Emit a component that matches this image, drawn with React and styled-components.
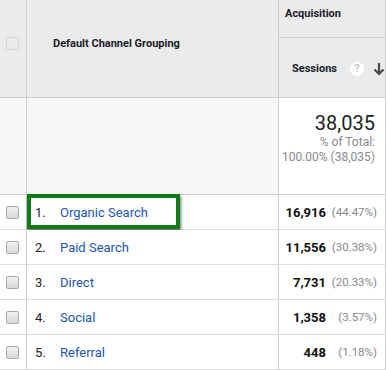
import React from "react";
import styled, { createGlobalStyle } from "styled-components";

const Global = createGlobalStyle`
  html, body { margin: 0; padding: 0; background: #fff; }
  body { font-family: Roboto, "Liberation Sans", Arial, sans-serif; }
`;

const Table = styled.div`
  display: grid;
  grid-template-columns: 27px 252px 107px;
  grid-template-rows: 38px 60px 97px repeat(5, 35px);
  width: 386px;
  color: #222;
`;

const Cell = styled.div`
  box-sizing: border-box;
  border-right: 1px solid #cfcfcf;
  border-bottom: 1px solid #dcdcdc;
  background: #fff;
  position: relative;
  display: flex;
  align-items: center;
`;

const HeadCheckCell = styled(Cell)`
  grid-row: 1 / 3;
  grid-column: 1;
  background: #ebebeb;
  border-bottom-color: #cfcfcf;
  justify-content: center;
  padding-bottom: 10px;
  padding-right: 2px;
`;

const HeadDimCell = styled(Cell)`
  grid-row: 1 / 3;
  grid-column: 2;
  background: #ebebeb;
  border-bottom-color: #cfcfcf;
  padding: 0 0 10px 26px;
  font-size: 11px;
  font-weight: 700;
  color: #1c1c2c;
`;

const GroupCell = styled(Cell)`
  background: #ebebeb;
  border-bottom-color: #d4d4d4;
  align-items: flex-start;
  padding: 7px 0 0 6px;
  font-size: 11px;
  font-weight: 700;
  color: #1c1c2c;
`;

const MetricHead = styled(Cell)`
  background: #ebebeb;
  border-bottom-color: #cfcfcf;
  padding: 2px 0 0 13px;
  font-size: 11px;
  font-weight: 700;
  color: #1c1c2c;
`;

const HelpIcon = styled.span`
  width: 14px;
  height: 14px;
  border-radius: 50%;
  background: #fff;
  color: #c4c4c4;
  font-size: 10px;
  font-weight: 700;
  display: inline-flex;
  align-items: center;
  justify-content: center;
  margin-left: 13px;
`;

const SortArrow = styled.svg`
  margin-left: 9px;
  width: 12px;
  height: 14px;
`;

const TotalCell = styled(Cell)`
  background: #f7f7f7;
  border-bottom-color: #cfcfcf;
`;

const TotalBox = styled(Cell)`
  flex-direction: column;
  align-items: flex-end;
  justify-content: flex-start;
  padding: 13px 10px 0 0;
  border-bottom-color: #cfcfcf;
`;

const Big = styled.div`
  font-size: 20px;
  line-height: 24px;
  color: #222;
`;

const Small = styled.div`
  font-size: 12px;
  line-height: 15px;
  color: #8a8a8a;
  text-align: right;
`;

const CheckCell = styled(Cell)`
  justify-content: center;
  padding-right: 2px;
`;

const Box = styled.span`
  box-sizing: border-box;
  width: 13px;
  height: 13px;
  border-radius: 2px;
  border: 1px solid ${(p) => (p.$light ? "#d8d8d8" : "#a9a9a9")};
  background: ${(p) =>
    p.$light ? "#ebebeb" : "linear-gradient(#f2f2f2, #d9d9d9)"};
`;

const DimCell = styled(Cell)`
  padding-left: 8px;
  font-size: 13px;
`;

const Index = styled.span`
  width: 25px;
  color: #222;
`;

const Link = styled.span`
  color: #2056ae;
`;

const ValCell = styled(Cell)`
  justify-content: flex-end;
  padding-right: 8px;
  font-size: 13px;
`;

const Num = styled.span`
  font-weight: 700;
  color: #111;
`;

const Pct = styled.span`
  display: inline-block;
  width: 51px;
  text-align: right;
  font-size: 11.5px;
  color: #888;
`;

const Highlight = styled.div`
  position: absolute;
  left: 0;
  top: -1px;
  width: 153px;
  height: 35px;
  box-sizing: border-box;
  border: 4px solid #137a17;
  box-shadow: 1px 2px 3px rgba(0, 0, 0, 0.55);
  pointer-events: none;
`;

const rows = [
  ["Organic Search", "16,916", "(44.47%)"],
  ["Paid Search", "11,556", "(30.38%)"],
  ["Direct", "7,731", "(20.33%)"],
  ["Social", "1,358", "(3.57%)"],
  ["Referral", "448", "(1.18%)"],
];

export default function App() {
  return (
    <>
      <Global />
      <Table>
        <HeadCheckCell>
          <Box $light />
        </HeadCheckCell>
        <HeadDimCell>Default Channel Grouping</HeadDimCell>
        <GroupCell>Acquisition</GroupCell>
        <MetricHead>
          Sessions
          <HelpIcon>?</HelpIcon>
          <SortArrow viewBox="0 0 12 14">
            <path
              d="M6 1 V12 M1.5 7.5 L6 12 L10.5 7.5"
              fill="none"
              stroke="#4a4a4a"
              strokeWidth="2.2"
            />
          </SortArrow>
        </MetricHead>

        <TotalCell />
        <TotalCell />
        <TotalBox>
          <Big>38,035</Big>
          <Small>% of Total:</Small>
          <Small>100.00% (38,035)</Small>
        </TotalBox>

        {rows.map(([name, n, p], i) => (
          <React.Fragment key={name}>
            <CheckCell>
              <Box />
            </CheckCell>
            <DimCell>
              <Index>{i + 1}.</Index>
              <Link>{name}</Link>
              {i === 0 && <Highlight />}
            </DimCell>
            <ValCell>
              <Num>{n}</Num>
              <Pct>{p}</Pct>
            </ValCell>
          </React.Fragment>
        ))}
      </Table>
    </>
  );
}
